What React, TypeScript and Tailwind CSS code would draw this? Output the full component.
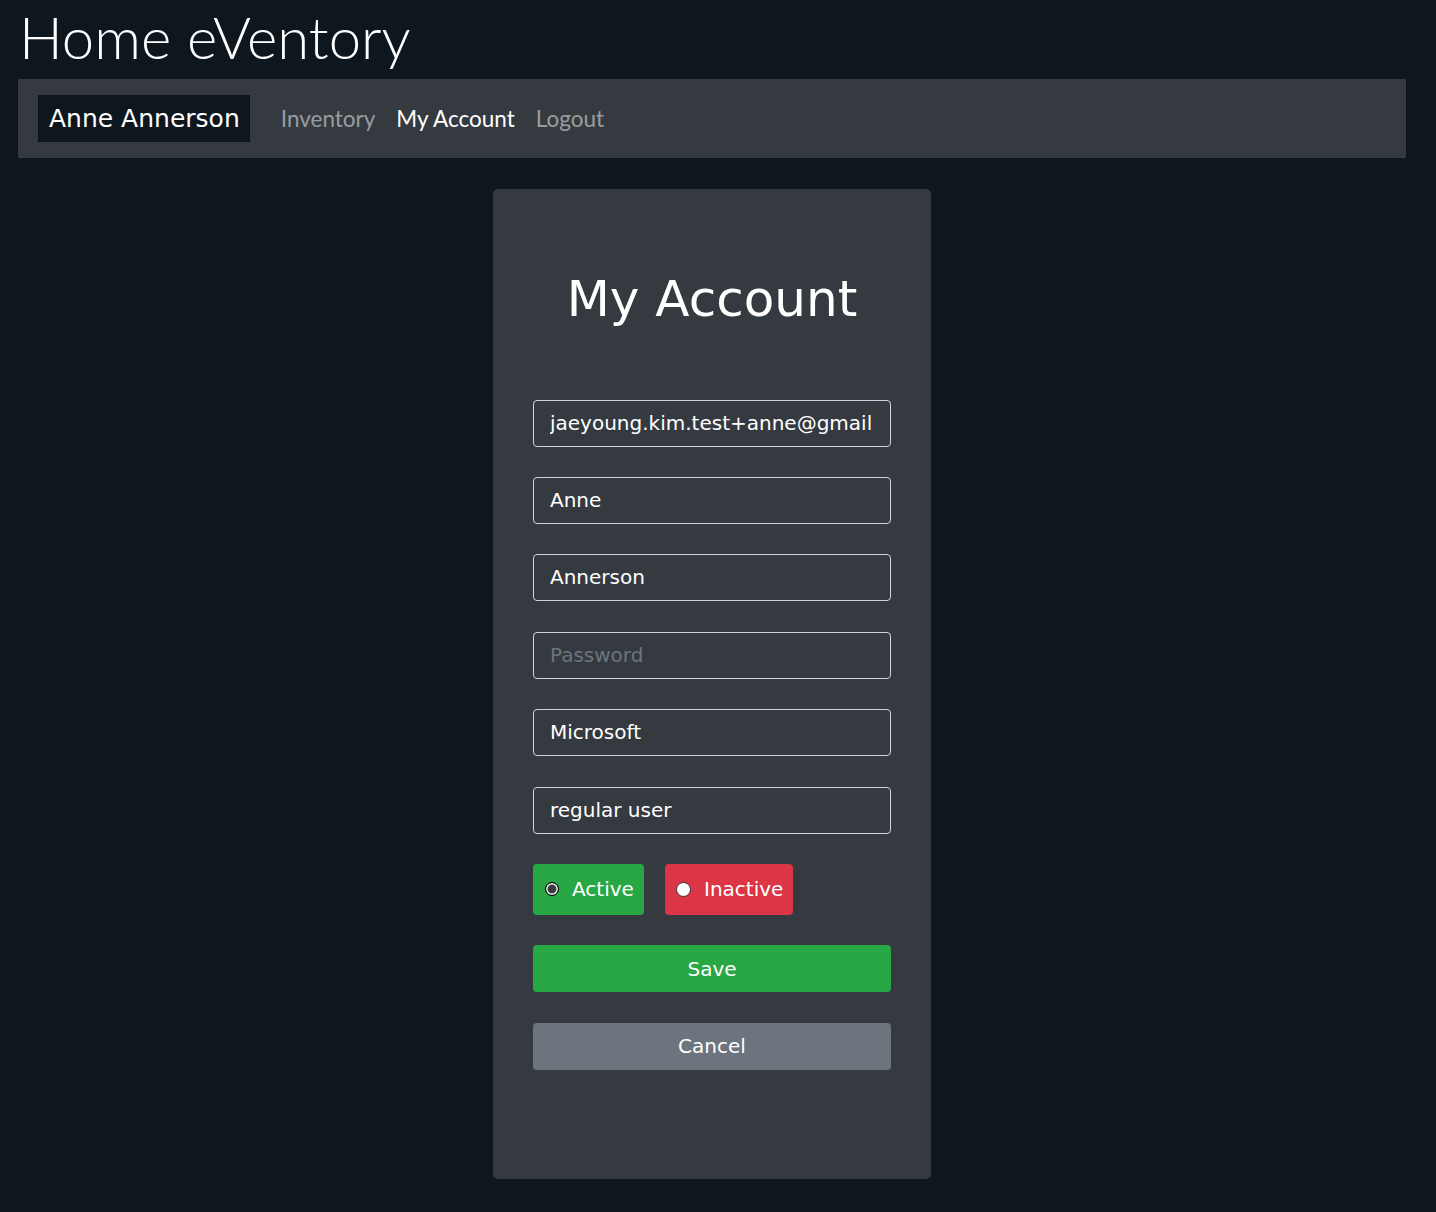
import React from "react";

const MONT = { fontFamily: '"DejaVu Sans", "Open Sans", sans-serif' };
const RALE = { fontFamily: 'Lato, "Open Sans", sans-serif' };

function Field({ value, placeholder }: { value?: string; placeholder?: string }) {
  return (
    <div className="h-[47px] w-full rounded-[4px] border border-[#ced4da] bg-[#343a40] px-4 flex items-center pb-[1px]">
      <div className="w-full overflow-hidden">
        {value ? (
          <span className="text-[20px] text-white whitespace-nowrap" style={MONT}>{value}</span>
        ) : (
          <span className="text-[20px] text-[#6c757d] whitespace-nowrap" style={MONT}>{placeholder}</span>
        )}
      </div>
    </div>
  );
}

export default function App() {
  return (
    <div className="min-h-[1212px] w-full bg-[#0e171e] pb-8">
      <h1 className="pl-[19px] pt-[2px] text-[58px] font-light leading-[1.2] text-white h-[79px]" style={RALE}>
        Home eVentory
      </h1>
      <nav className="ml-[18px] w-[1388px] h-[79px] bg-[#343a40] flex items-center pl-5">
        <div className="h-[47px] pl-[11px] pr-[10px] bg-[#0e171e] flex items-center text-[25px] text-white" style={MONT}>
          Anne Annerson
        </div>
        <div className="flex items-center ml-[31px] gap-[21px] text-[22.5px]" style={RALE}>
          <span className="text-white/50">Inventory</span>
          <span className="text-white">My Account</span>
          <span className="text-white/50">Logout</span>
        </div>
      </nav>
      <div className="ml-[18px] w-[1388px] flex justify-center pt-[31px]">
        <div className="w-[438px] h-[990px] bg-[#343a40] rounded-[5px] px-10 pt-[80px]">
          <h2 className="text-center text-[50px] text-white leading-[1.2]" style={MONT}>
            My Account
          </h2>
          <div className="mt-[70.6px] flex flex-col gap-[30.4px]">
            <Field value="jaeyoung.kim.test+anne@gmail.com" />
            <Field value="Anne" />
            <Field value="Annerson" />
            <Field placeholder="Password" />
            <Field value="Microsoft" />
            <Field value="regular user" />
            <div className="flex gap-[21px] h-[51px]">
              <div className="h-full w-[111px] rounded-[4px] bg-[#28a745] flex items-center pl-[12px] gap-[13px]">
                <span className="w-[14px] h-[14px] rounded-full border-[1.5px] border-black bg-[#3a3d40] shadow-[inset_0_0_0_1.5px_white]" />
                <span className="text-[20px] text-white" style={MONT}>Active</span>
              </div>
              <div className="h-full w-[128px] rounded-[4px] bg-[#dc3545] flex items-center pl-[11px] gap-[13px]">
                <span className="w-[15px] h-[15px] rounded-full border border-[#333] bg-white" />
                <span className="text-[20px] text-white" style={MONT}>Inactive</span>
              </div>
            </div>
            <div className="h-[47px] rounded-[4px] bg-[#28a745] flex items-center justify-center text-[20px] text-white" style={MONT}>
              Save
            </div>
            <div className="h-[47px] rounded-[4px] bg-[#6c757d] flex items-center justify-center text-[20px] text-white" style={MONT}>
              Cancel
            </div>
          </div>
        </div>
      </div>
    </div>
  );
}
